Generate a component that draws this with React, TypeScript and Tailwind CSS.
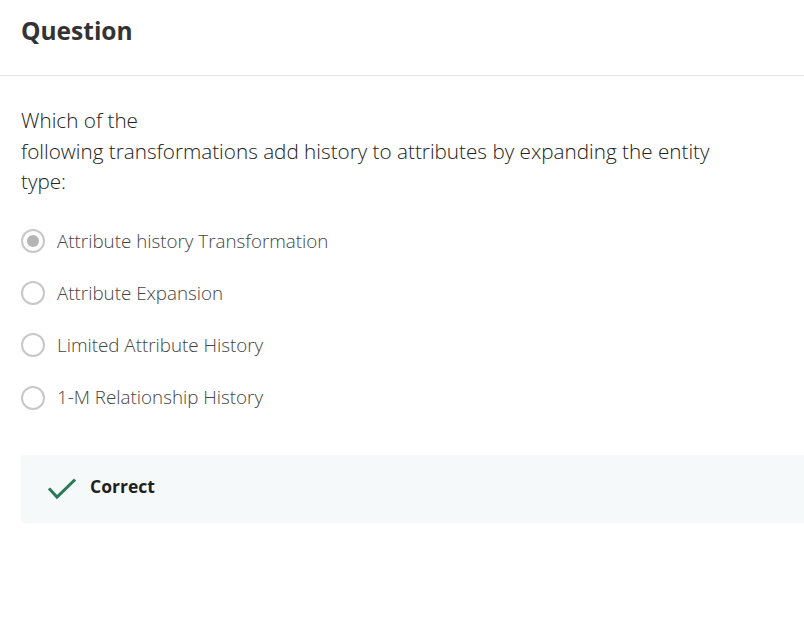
import { FC } from "react"

const options = [
    "Attribute history Transformation",
    "Attribute Expansion",
    "Limited Attribute History",
    "1-M Relationship History",
]

const Radio: FC<{ checked?: boolean }> = ({ checked }) => {
    return (
        <span className="flex h-[24px] w-[24px] shrink-0 items-center justify-center rounded-full border-2 border-[#c8c8c8] bg-white">
            {checked && <span className="h-[12px] w-[12px] rounded-full bg-[#b5b5b5]" />}
        </span>
    )
}

const App: FC = () => {
    return (
        <div className="min-h-[633px] w-[804px] bg-white text-[#333] [font-family:'Open_Sans',sans-serif]">
            <div className="border-b border-[#e2e2e2] px-[21px] pb-[27px] pt-[14px]">
                <h1 className="text-[24.5px] font-bold leading-[34px] text-[#333]">Question</h1>
            </div>
            <div className="px-[21px] pt-[29px]">
                <p className="w-[720px] text-[20.7px] font-light leading-[30.5px] text-[#222]">
                    Which of the
                    <br />
                    following transformations add history to attributes by expanding the entity type:
                </p>
                <div className="mt-[18px] flex flex-col">
                    {options.map((o, i) => (
                        <label key={o} className="flex h-[52.3px] items-center gap-[12px]">
                            <Radio checked={i === 0} />
                            <span className="text-[18.8px] font-light text-[#444]">{o}</span>
                        </label>
                    ))}
                </div>
                <div className="-mr-[21px] mt-[31px] flex h-[68px] items-center gap-[14px] bg-[#f6f9f9] pl-[27px]">
                    <svg width="28" height="22" viewBox="0 0 28 22" fill="none">
                        <path d="M2 11.5 L9 19 L26 2.5" stroke="#2a7a58" strokeWidth="3" strokeLinecap="square" />
                    </svg>
                    <span className="mb-[5px] text-[17.5px] font-bold text-[#1f1f1f]">Correct</span>
                </div>
            </div>
        </div>
    )
}

export default App
